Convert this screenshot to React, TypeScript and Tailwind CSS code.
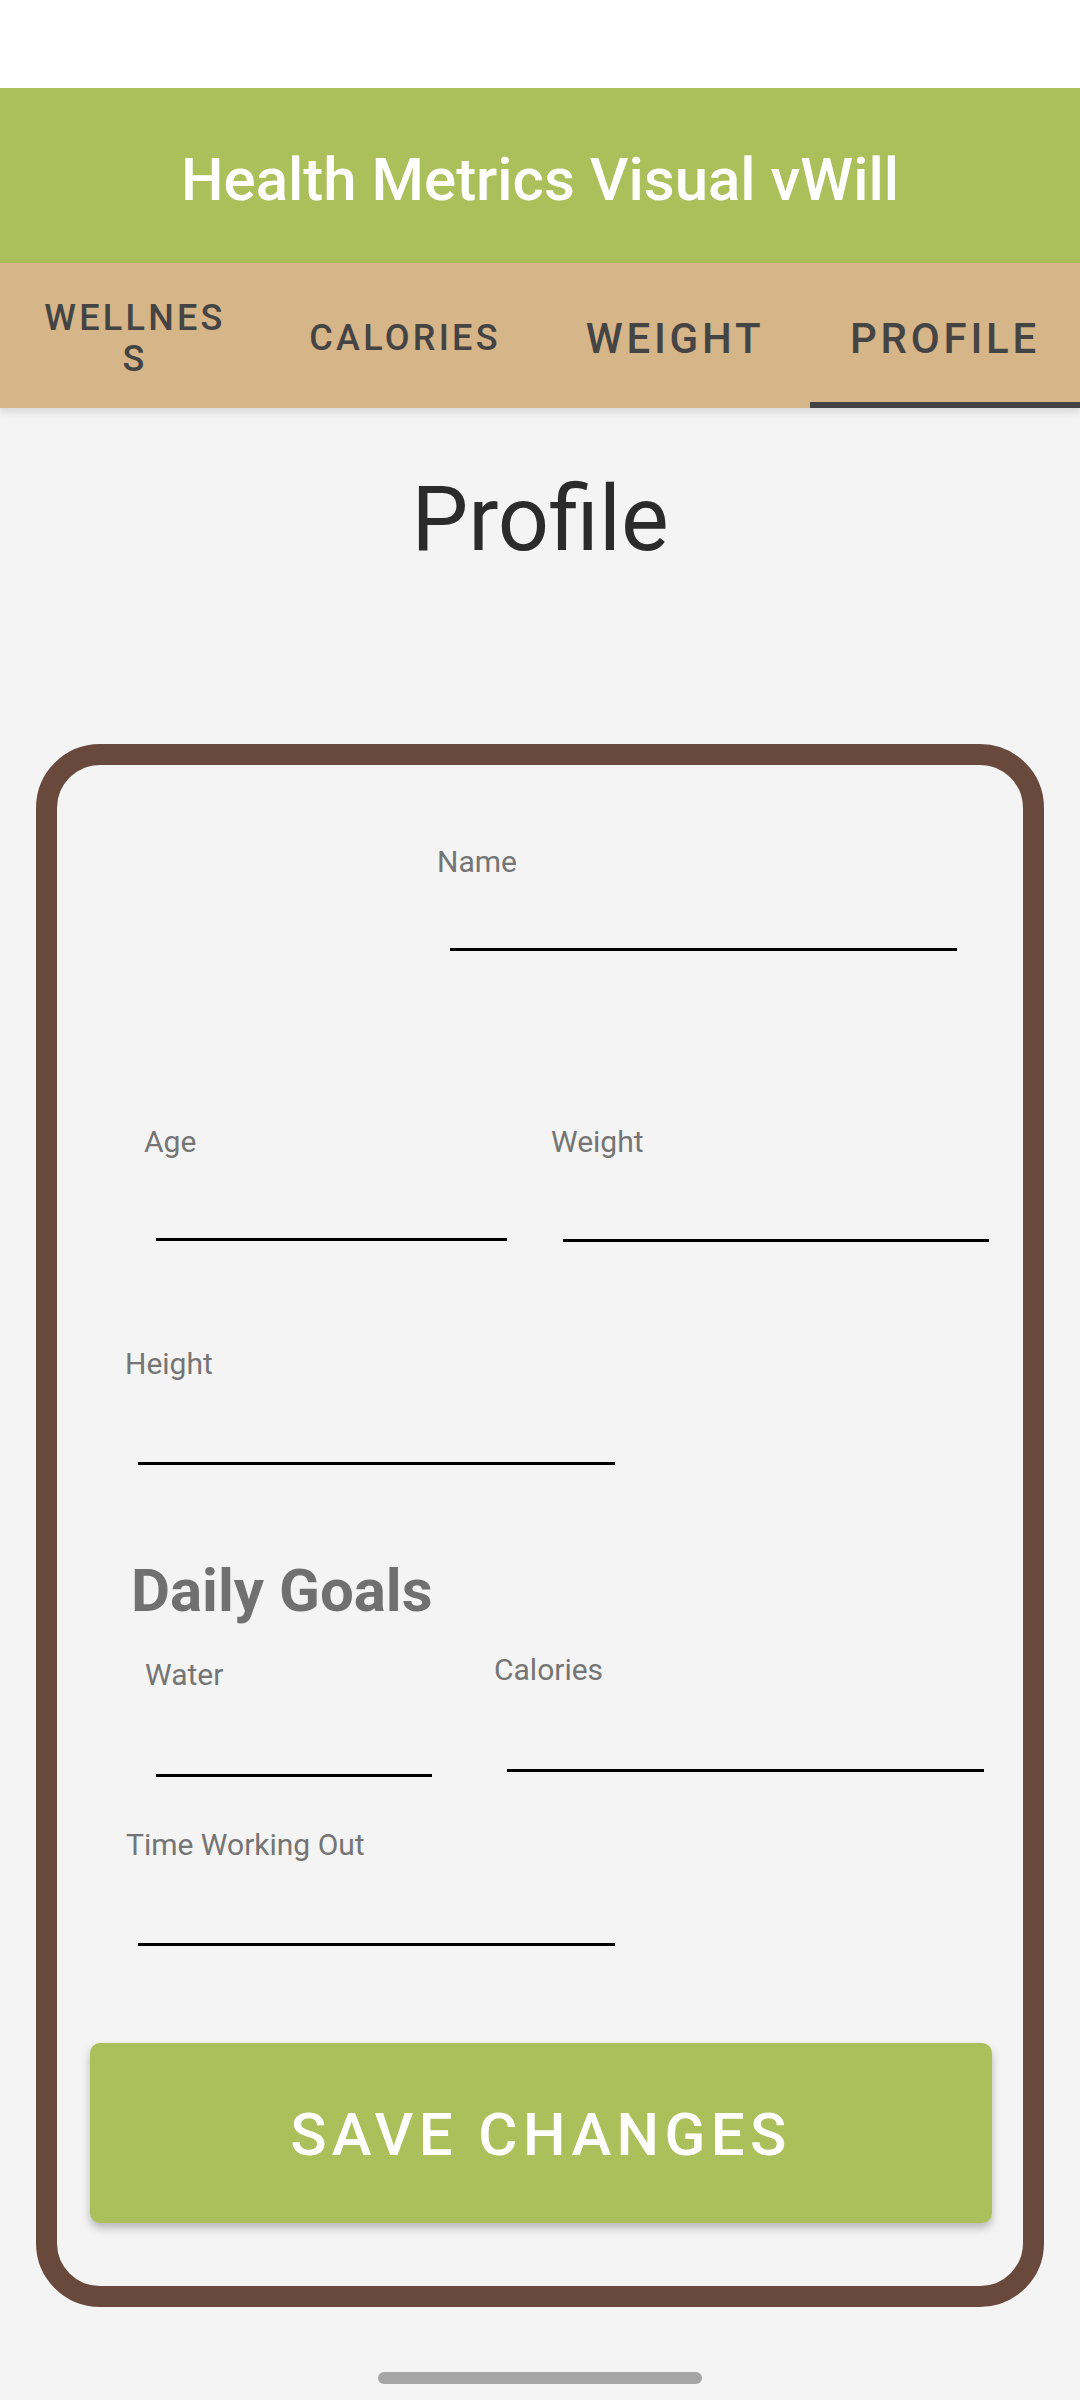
import type { ReactNode } from 'react';

const font = { fontFamily: 'Roboto, "Noto Sans", sans-serif' };

function Label({ children, className = '' }: { children: ReactNode; className?: string }) {
  return <div className={`text-[30px] leading-[36px] text-[#757575] whitespace-nowrap ${className}`}>{children}</div>;
}

function Line({ className = '' }: { className?: string }) {
  return <div className={`h-[3px] bg-black ${className}`} />;
}

export default function App() {
  return (
    <div className="w-[1080px] min-h-[2400px] bg-[#f4f4f4] flex flex-col" style={font}>
      {/* status bar */}
      <div className="h-[88px] bg-white" />

      {/* app bar */}
      <div className="h-[175px] bg-[#abbf5b] flex items-center justify-center pt-2">
        <h1 className="text-[60px] leading-[60px] font-medium text-white">Health Metrics Visual vWill</h1>
      </div>

      {/* tabs */}
      <div className="relative z-10 h-[145px] bg-[#d6b588] flex shadow-[0_4px_8px_rgba(0,0,0,0.12)] text-[#444444] font-medium">
        <div className="flex-1 flex items-center justify-center pt-[6px]">
          <div className="text-[36px] leading-[41px] tracking-[0.09em] text-center">
            WELLNES
            <br />S
          </div>
        </div>
        <div className="flex-1 flex items-center justify-center pt-[6px]">
          <span className="text-[36px] leading-[41px] tracking-[0.09em]">CALORIES</span>
        </div>
        <div className="flex-1 flex items-center justify-center pt-[6px]">
          <span className="text-[42px] leading-[44px] tracking-[0.09em]">WEIGHT</span>
        </div>
        <div className="relative flex-1 flex items-center justify-center pt-[6px]">
          <span className="text-[42px] leading-[44px] tracking-[0.09em]">PROFILE</span>
          <div className="absolute left-0 right-0 bottom-0 h-[6px] bg-[#424242]" />
        </div>
      </div>

      <h2 className="mt-[67px] text-center text-[90px] leading-[90px] text-[#2b2b2b]">Profile</h2>

      {/* card */}
      <div className="mt-[179px] mx-[36px] border-[21px] border-[#68493c] rounded-[64px] pt-[79px] pb-[63px]">
        {/* name */}
        <Label className="ml-[380px]">Name</Label>
        <Line className="ml-[393px] w-[507px] mt-[68px]" />

        {/* age / weight */}
        <div className="flex mt-[173px]">
          <div className="w-[494px]">
            <Label className="ml-[87px]">Age</Label>
            <Line className="ml-[99px] w-[351px] mt-[78px]" />
          </div>
          <div>
            <Label>Weight</Label>
            <Line className="ml-[12px] w-[426px] mt-[79px]" />
          </div>
        </div>

        {/* height */}
        <Label className="ml-[68px] mt-[104px]">Height</Label>
        <Line className="ml-[81px] w-[477px] mt-[80px]" />

        <h3 className="ml-[74px] mt-[96px] text-[60px] leading-[60px] font-bold text-[#707070]">Daily Goals</h3>

        {/* water / calories */}
        <div className="flex mt-[31px]">
          <div className="w-[437px] pt-[5px]">
            <Label className="ml-[88px]">Water</Label>
            <Line className="ml-[99px] w-[276px] mt-[81px]" />
          </div>
          <div>
            <Label>Calories</Label>
            <Line className="ml-[13px] w-[477px] mt-[81px]" />
          </div>
        </div>

        {/* time working out */}
        <Label className="ml-[69px] mt-[50px]">Time Working Out</Label>
        <Line className="ml-[81px] w-[477px] mt-[80px]" />

        <button className="mt-[97px] ml-[33px] w-[902px] h-[180px] rounded-[10px] bg-[#abbf5b] shadow-[0_5px_8px_rgba(0,0,0,0.25)] flex items-center justify-center pt-1">
          <span className="text-[60px] leading-[60px] font-medium tracking-[0.09em] text-white">SAVE CHANGES</span>
        </button>
      </div>

      {/* home indicator */}
      <div className="mt-[65px] mx-auto w-[324px] h-[12px] rounded-full bg-[#a6a6a6]" />
    </div>
  );
}
